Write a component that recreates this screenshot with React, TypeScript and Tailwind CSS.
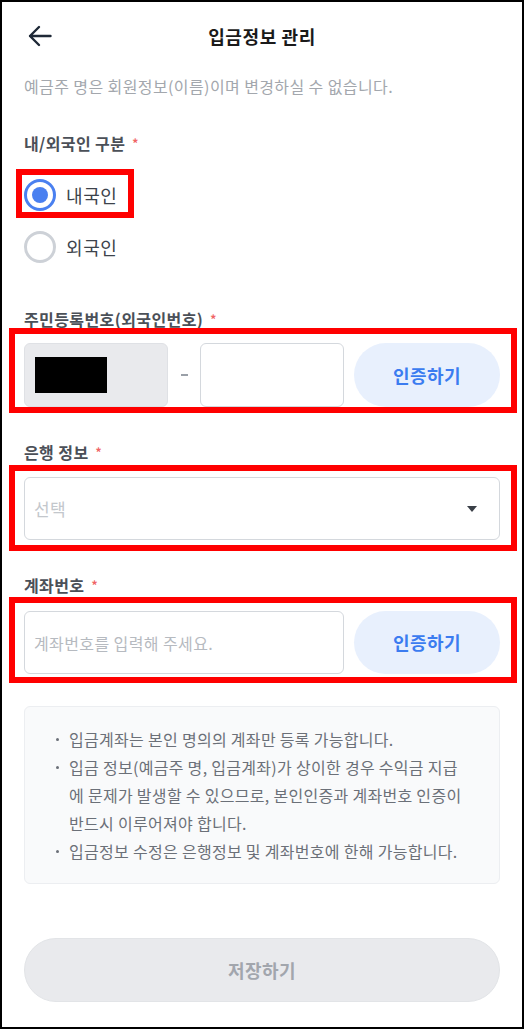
import React from "react";

function Label({ text }: { text: string }) {
  return (
    <div className="text-[16px] leading-[22px] tracking-[0.4px] font-semibold text-[#4b5058] flex items-start">
      <span>{text}</span>
      <span className="ml-[7px] mt-[3px] text-[12px] leading-[16px] text-[#f06464]">*</span>
    </div>
  );
}

function Radio({ checked, label }: { checked: boolean; label: string }) {
  return (
    <div className="flex items-center h-8 gap-[10px]">
      {checked ? (
        <div className="w-8 h-8 rounded-full border-[3px] border-[#4a80f0] flex items-center justify-center">
          <div className="w-4 h-4 rounded-full bg-[#4a80f0]" />
        </div>
      ) : (
        <div className="w-8 h-8 rounded-full border-[3px] border-[#cdd1d7]" />
      )}
      <span className="text-[18px] leading-[24px] tracking-[0.6px] text-[#3d434b]">{label}</span>
    </div>
  );
}

function VerifyButton() {
  return (
    <div className="flex-1 h-full ml-[10px] rounded-full bg-[#e8f0fd] flex items-center justify-center text-[18px] tracking-[0.5px] font-bold text-[#3b7cf0]">
      인증하기
    </div>
  );
}

function Dot() {
  return (
    <span className="w-[13px] shrink-0 flex items-center h-[28px]">
      <span className="w-[3px] h-[3px] rounded-full bg-[#6b7078]" />
    </span>
  );
}

export default function App() {
  return (
    <div className="relative w-[524px] h-[1029px] bg-white overflow-hidden font-['Noto_Sans_CJK_KR','Noto_Sans',sans-serif]">
      <div className="px-6 pt-[2px]">
        {/* header */}
        <div className="h-[68px] grid grid-cols-[48px_1fr_48px] items-center">
          <div className="ml-[4px] flex items-center">
            <svg width="24" height="22" viewBox="0 0 24 22" fill="none">
              <path
                d="M22.5 11H2M11 2L2 11L11 20"
                stroke="#1f2937"
                strokeWidth="2.4"
                strokeLinecap="round"
                strokeLinejoin="round"
              />
            </svg>
          </div>
          <div className="text-center text-[18px] tracking-[0.6px] font-semibold text-[#1a1a1a]">입금정보 관리</div>
          <div />
        </div>

        <div className="mt-[6px] text-[16px] leading-[20px] tracking-[0.4px] text-[#a3a7ad] whitespace-nowrap">
          예금주 명은 회원정보(이름)이며 변경하실 수 없습니다.
        </div>

        <div className="mt-[36px]">
          <Label text="내/외국인 구분" />
        </div>
        <div className="mt-[25px] flex flex-col gap-[20px]">
          <Radio checked label="내국인" />
          <Radio checked={false} label="외국인" />
        </div>

        <div className="mt-[45px]">
          <Label text="주민등록번호(외국인번호)" />
        </div>
        <div className="mt-[13px] h-[64px] flex items-center">
          <div className="w-[144px] h-full rounded-[6px] bg-[#e9eaed] border border-[#dfe1e5] flex items-center pl-[10px]">
            <div className="w-[72px] h-[36px] bg-black" />
          </div>
          <div className="w-[32px] flex justify-center">
            <div className="w-[7px] h-[2px] bg-[#9aa0a8]" />
          </div>
          <div className="w-[144px] h-full rounded-[6px] bg-white border-[1.5px] border-[#d4d8dd]" />
          <VerifyButton />
        </div>

        <div className="mt-[34px]">
          <Label text="은행 정보" />
        </div>
        <div className="mt-[14px] h-[63px] rounded-[6px] border-[1.5px] border-[#d4d8dd] flex items-center justify-between pl-[9px] pr-[22px]">
          <span className="text-[17px] tracking-[0.4px] text-[#c3c7cc]">선택</span>
          <svg width="10" height="6" viewBox="0 0 10 6">
            <path d="M0 0H10L5 6Z" fill="#3a3f47" />
          </svg>
        </div>

        <div className="mt-[34px]">
          <Label text="계좌번호" />
        </div>
        <div className="mt-[15px] h-[63px] flex items-center">
          <div className="w-[320px] h-full rounded-[6px] bg-white border-[1.5px] border-[#d4d8dd] flex items-center pl-[9px]">
            <span className="text-[16px] tracking-[0.4px] text-[#b6bac0]">계좌번호를 입력해 주세요.</span>
          </div>
          <VerifyButton />
        </div>

        <div className="mt-[32px] h-[178px] rounded-[6px] bg-[#f9fafb] border border-[#eceef1] pl-[31px] py-[18px] text-[16px] leading-[28px] tracking-[0.3px] text-[#6b7078] whitespace-nowrap">
          <div className="flex">
            <Dot />
            <span>입금계좌는 본인 명의의 계좌만 등록 가능합니다.</span>
          </div>
          <div className="flex">
            <Dot />
            <span>
              입금 정보(예금주 명, 입금계좌)가 상이한 경우 수익금 지급
              <br />
              에 문제가 발생할 수 있으므로, 본인인증과 계좌번호 인증이
              <br />
              반드시 이루어져야 합니다.
            </span>
          </div>
          <div className="flex">
            <Dot />
            <span>입금정보 수정은 은행정보 및 계좌번호에 한해 가능합니다.</span>
          </div>
        </div>

        <div className="mt-[54px] h-[64px] rounded-full bg-[#e9eaed] border border-[#e2e4e7] flex items-center justify-center text-[18px] tracking-[0.5px] font-bold text-[#a2a6ad]">
          저장하기
        </div>
      </div>

      {/* annotation boxes */}
      <div className="absolute left-[16px] top-[169px] w-[118px] h-[49px] border-[6px] border-[#ff0000] pointer-events-none" />
      <div className="absolute left-[9px] top-[328px] w-[508px] h-[85px] border-[6px] border-[#ff0000] pointer-events-none" />
      <div className="absolute left-[9px] top-[465px] w-[508px] h-[86px] border-[6px] border-[#ff0000] pointer-events-none" />
      <div className="absolute left-[9px] top-[597px] w-[508px] h-[86px] border-[6px] border-[#ff0000] pointer-events-none" />

      {/* outer frame */}
      <div className="absolute inset-0 border-2 border-black pointer-events-none" />
    </div>
  );
}
